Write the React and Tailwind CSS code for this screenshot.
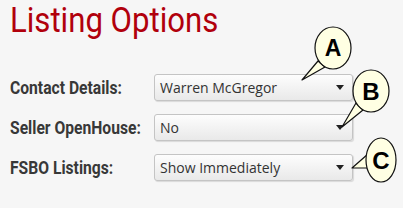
import React from 'react';

const rows = [
  { label: 'Contact Details:', value: 'Warren McGregor' },
  { label: 'Seller OpenHouse:', value: 'No' },
  { label: 'FSBO Listings:', value: 'Show Immediately' },
];

function Select({ value }) {
  return (
    <div className="flex h-[27px] w-[199px] items-center justify-between rounded-[3px] border border-[#c4c4c4] bg-gradient-to-b from-[#fdfdfd] to-[#e9e9e9] pl-[5px] pr-[8px] shadow-[1px_1px_1px_rgba(0,0,0,0.12)]">
      <span className="font-['Open_Sans',sans-serif] text-[14px] text-[#333]">{value}</span>
      <svg width="8" height="5" viewBox="0 0 8 5">
        <path d="M0 0 L8 0 L4 5 Z" fill="#222" />
      </svg>
    </div>
  );
}

function Callouts() {
  const balloon = (cx, cy, rx, ry, tail, letter, size) => (
    <g>
      <path
        d={tail}
        fill="#ffffe3"
        stroke="#111"
        strokeWidth="1.2"
        strokeLinejoin="round"
      />
      <ellipse cx={cx} cy={cy} rx={rx} ry={ry} fill="#ffffe3" stroke="#111" strokeWidth="1.2" />
      <text
        x={cx}
        y={cy + size * 0.36}
        textAnchor="middle"
        fontFamily="Liberation Sans, Arial, sans-serif"
        fontWeight="bold"
        fontSize={size}
        fill="#000"
      >
        {letter}
      </text>
    </g>
  );
  return (
    <svg className="pointer-events-none absolute left-0 top-0" width="403" height="208" viewBox="0 0 403 208">
      {balloon(333, 48, 18, 21, 'M318 61 L302 80 L325 67 Z', 'A', 23)}
      {balloon(371, 91, 18, 21, 'M356 103 L342 127 L363 110 Z', 'B', 24)}
      {balloon(381, 160, 15, 22, 'M368 154 L352 168 L369 168 Z', 'C', 24)}
    </svg>
  );
}

export default function App() {
  return (
    <div className="relative h-[208px] w-[403px] overflow-hidden bg-[#f6f6f6]">
      <div className="flex flex-col pl-[10px] pt-[3px]">
        <h1 className="origin-left scale-x-[0.89] font-['Roboto',sans-serif] text-[35px] leading-none text-[#b1000c]">Listing Options</h1>
        <div className="mt-[36px] flex flex-col gap-[13px]">
          {rows.map((r) => (
            <div key={r.label} className="flex items-center">
              <div className="w-[144px] whitespace-nowrap">
                <span className="inline-block origin-left scale-x-[0.87] font-['Roboto',sans-serif] text-[18px] font-bold text-[#383838]">{r.label}</span>
              </div>
              <Select value={r.value} />
            </div>
          ))}
        </div>
      </div>
      <Callouts />
    </div>
  );
}
